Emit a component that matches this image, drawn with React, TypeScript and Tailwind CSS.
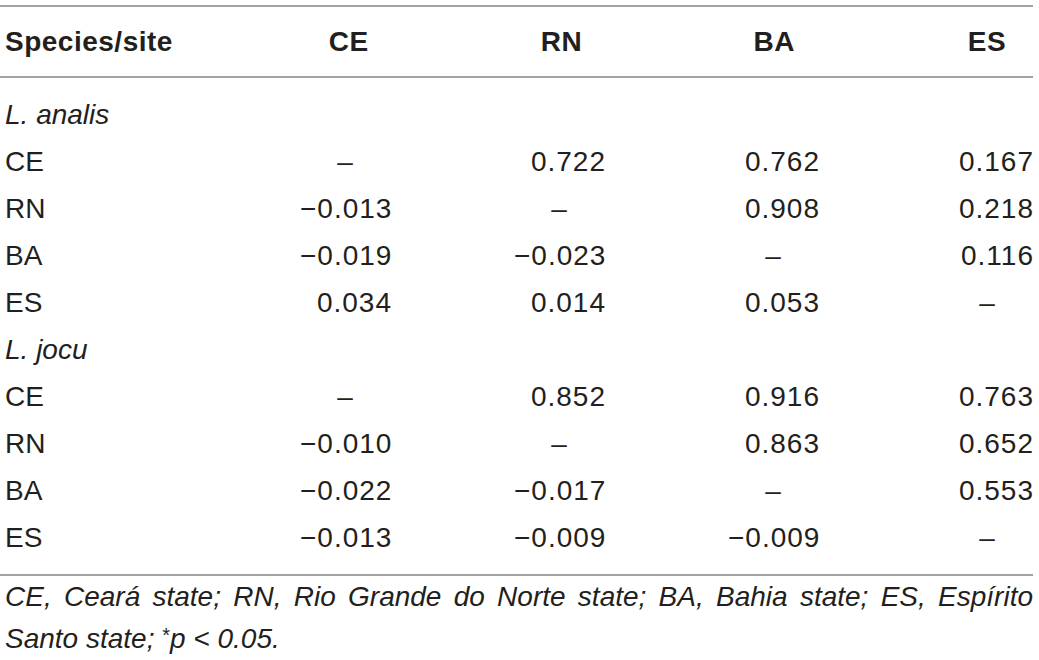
import React from "react";

type Row = { site: string; vals: string[] };

const groups: { species: string; rows: Row[] }[] = [
  {
    species: "L. analis",
    rows: [
      { site: "CE", vals: ["–", "0.722", "0.762", "0.167"] },
      { site: "RN", vals: ["−0.013", "–", "0.908", "0.218"] },
      { site: "BA", vals: ["−0.019", "−0.023", "–", "0.116"] },
      { site: "ES", vals: ["0.034", "0.014", "0.053", "–"] },
    ],
  },
  {
    species: "L. jocu",
    rows: [
      { site: "CE", vals: ["–", "0.852", "0.916", "0.763"] },
      { site: "RN", vals: ["−0.010", "–", "0.863", "0.652"] },
      { site: "BA", vals: ["−0.022", "−0.017", "–", "0.553"] },
      { site: "ES", vals: ["−0.013", "−0.009", "−0.009", "–"] },
    ],
  },
];

const cols = ["CE", "RN", "BA", "ES"];

function Cell({ v }: { v: string }) {
  const dash = v === "–";
  return (
    <div className="flex justify-end">
      <div className={`w-[92px] ${dash ? "text-center" : "text-right tracking-[1px] -mr-[1px]"}`}>{v}</div>
    </div>
  );
}

export default function App() {
  return (
    <div className="w-[1039px] h-[660px] bg-white text-[#231f20] font-['Liberation_Sans',Arial,sans-serif] text-[28px] overflow-hidden">
      <div className="w-[1033px] pt-[5px]">
        {/* head */}
        <div className="border-t-2 border-b-2 border-[#a3a3a3] h-[73px] grid grid-cols-[177px_repeat(4,1fr)] items-center font-bold tracking-[0.5px] pl-[5px]">
          <div className="whitespace-nowrap">Species/site</div>
          {cols.map((c) => (
            <div key={c} className="flex justify-end">
              <div className="w-[92px] text-center">{c}</div>
            </div>
          ))}
        </div>

        {/* body */}
        <div className="pt-[13px] pb-[13px] border-b-2 border-[#a3a3a3]">
          {groups.map((g) => (
            <React.Fragment key={g.species}>
              <div className="h-[47px] flex items-center pl-[5px] italic">{g.species}</div>
              {g.rows.map((r) => (
                <div key={g.species + r.site} className="h-[47px] grid grid-cols-[172px_repeat(4,1fr)] items-center pl-[5px]">
                  <div>{r.site}</div>
                  {r.vals.map((v, i) => (
                    <Cell key={i} v={v} />
                  ))}
                </div>
              ))}
            </React.Fragment>
          ))}
        </div>

        {/* footnote */}
        <p className="italic text-justify leading-[42px] pl-[5px]">
          CE, Ceará state; RN, Rio Grande do Norte state; BA, Bahia state; ES, Espírito Santo state;{" "}
          <span className="inline-block text-[20px] not-italic align-top leading-[34px]">*</span>p &lt; 0.05.
        </p>
      </div>
    </div>
  );
}
